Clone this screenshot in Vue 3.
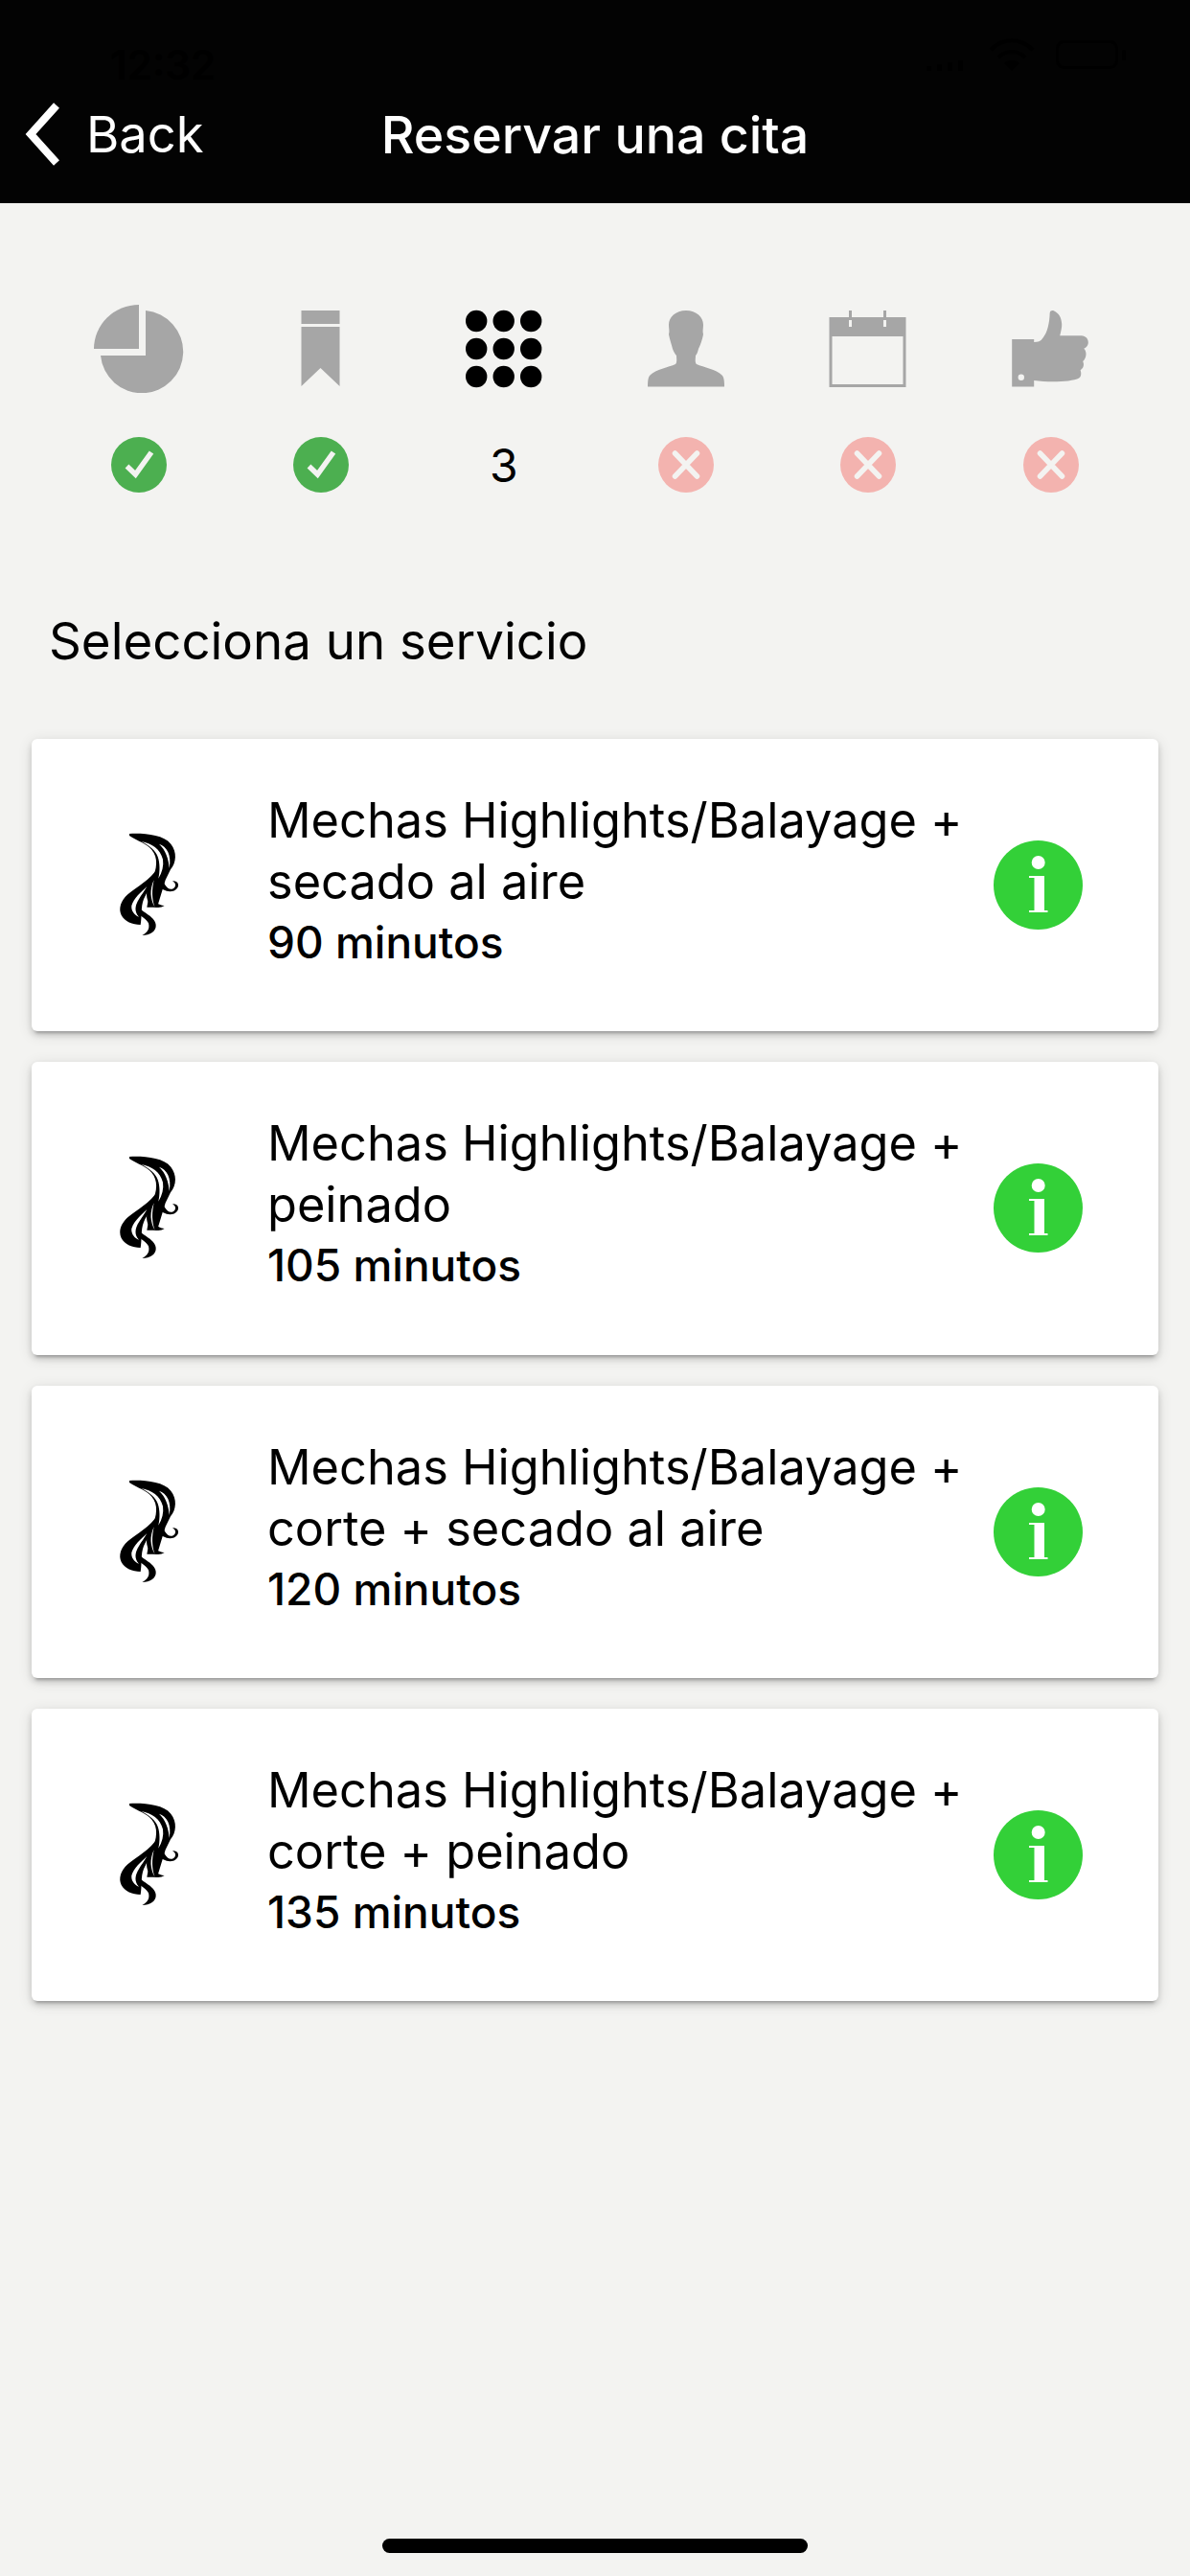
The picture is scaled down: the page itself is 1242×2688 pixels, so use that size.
<script setup>
const services = [
  { name: 'Mechas Highlights/Balayage + secado al aire', time: '90 minutos' },
  { name: 'Mechas Highlights/Balayage + peinado', time: '105 minutos' },
  { name: 'Mechas Highlights/Balayage + corte + secado al aire', time: '120 minutos' },
  { name: 'Mechas Highlights/Balayage + corte + peinado', time: '135 minutos' }
]
</script>

<template>
  <div class="page">
    <header class="header">
      <div class="status">
        <span class="clock">12:32</span>
        <svg class="status-icons" width="230" height="36" viewBox="960 50 230 36">
          <g fill="#000">
            <rect x="967" y="79" width="5" height="5" />
            <rect x="978" y="77" width="5" height="7" />
            <rect x="989" y="75" width="5" height="9" />
            <rect x="1000" y="73" width="5" height="11" />
          </g>
          <g fill="none" stroke="#000" stroke-width="4">
            <path d="M1034 62 C1047 49 1065 49 1078 62" />
            <path d="M1042 70 C1050 62 1062 62 1070 70" />
          </g>
          <path d="M1056 84 L1048 76 C1052 72 1060 72 1064 76 Z" fill="#000" />
          <rect x="1103.5" y="53.5" width="62" height="27" rx="7" fill="none" stroke="#000" stroke-width="3" />
          <rect x="1171" y="62" width="4" height="11" rx="2" fill="#000" />
        </svg>
      </div>
      <nav class="nav">
        <div class="back">
          <svg class="chevron" width="40" height="68" viewBox="0 0 40 68">
            <path d="M34 4 L7 34 L34 64" fill="none" stroke="#fff" stroke-width="8" />
          </svg>
          <span>Back</span>
        </div>
        <h1 class="title">Reservar una cita</h1>
        <div></div>
      </nav>
    </header>

    <main class="main">
      <section class="steps">
        <svg class="step-icon" viewBox="95 318 100 92">
          <path d="M145 318 V364 H98 A47 46 0 0 1 145 318Z" fill="#a6a6a6" />
          <path d="M152 324 A43.2 43.2 0 1 1 105 371 H152Z" fill="#a6a6a6" />
        </svg>
        <svg class="step-icon" viewBox="285.5 318 100 92">
          <rect x="315" y="324" width="40" height="14" fill="#a6a6a6" />
          <path d="M315 341 H355 V403 L335 384 L315 403Z" fill="#a6a6a6" />
        </svg>
        <svg class="step-icon" viewBox="475.8 318 100 92">
          <g fill="#000">
            <circle cx="497" cy="335" r="11.2" /><circle cx="525.5" cy="335" r="11.2" /><circle cx="554" cy="335" r="11.2" />
            <circle cx="497" cy="364" r="11.2" /><circle cx="525.5" cy="364" r="11.2" /><circle cx="554" cy="364" r="11.2" />
            <circle cx="497" cy="393" r="11.2" /><circle cx="525.5" cy="393" r="11.2" /><circle cx="554" cy="393" r="11.2" />
          </g>
        </svg>
        <svg class="step-icon" viewBox="-10 -6 100 92">
          <path d="M40 0 C51 0 58 7 58 15 C58 19 57 21 58 25 C57 30 55 36 53 40 C52 44 51 46 50 47 C50 50 49 54 51 56 C58 59 72 62 77 67 C79 69 80 71 80 79.5 L0 79.5 C0 71 1 69 3 67 C8 62 22 59 29 56 C31 54 30 50 30 47 C29 46 27 43 26 40 C25 36 23 30 22 25 C23 21 22 19 22 15 C22 7 29 0 40 0Z" fill="#a6a6a6" />
        </svg>
        <svg class="step-icon" viewBox="856.5 318 100 92">
          <path d="M866 331 H946 V404 H866Z M869 351 V401 H943 V351Z" fill="#a6a6a6" fill-rule="evenodd" />
          <rect x="886.5" y="324" width="3" height="7" fill="#a6a6a6" />
          <rect x="922.5" y="324" width="3" height="7" fill="#a6a6a6" />
          <rect x="886.5" y="334" width="3" height="7" fill="#f3f3f1" />
          <rect x="922.5" y="334" width="3" height="7" fill="#f3f3f1" />
        </svg>
        <svg class="step-icon" viewBox="-9.2 -6 100 92">
          <path d="M0 30 H23 V33 C27 33 30 32 32 29 C37 23 39 14 39.5 2.5 C40 0 42 -0.5 44 0.5 C49 3 51.5 7 52 14 C52.2 18 51 22 50 26.3 H72.5 C77 26.3 80 30 79.6 34 C79.3 37 77 39 75 39.7 C78 42 78.5 49 74 53 C75.5 56 75 60 71.4 62.3 C72.5 65 72.5 69 70 70.5 C62 74.5 40 75.5 23 73 V79.5 H0Z" fill="#a6a6a6" />
          <circle cx="9.6" cy="69.7" r="3.2" fill="#f3f3f1" />
        </svg>

        <svg class="step-state" viewBox="-29 -29 58 58">
          <circle r="29" fill="#4caf50" />
          <path d="M-12.5 1.5 L-3.6 10 L13 -13" fill="none" stroke="#f3f3f1" stroke-width="5.5" />
        </svg>
        <svg class="step-state" viewBox="-29 -29 58 58">
          <circle r="29" fill="#4caf50" />
          <path d="M-12.5 1.5 L-3.6 10 L13 -13" fill="none" stroke="#f3f3f1" stroke-width="5.5" />
        </svg>
        <div class="step-number">3</div>
        <svg class="step-state" viewBox="-29 -29 58 58">
          <circle r="29" fill="#f3b3af" />
          <path d="M-11.5 -12 L11.5 12 M11.5 -12 L-11.5 12" fill="none" stroke="#f3f3f1" stroke-width="5.5" stroke-linecap="round" />
        </svg>
        <svg class="step-state" viewBox="-29 -29 58 58">
          <circle r="29" fill="#f3b3af" />
          <path d="M-11.5 -12 L11.5 12 M11.5 -12 L-11.5 12" fill="none" stroke="#f3f3f1" stroke-width="5.5" stroke-linecap="round" />
        </svg>
        <svg class="step-state" viewBox="-29 -29 58 58">
          <circle r="29" fill="#f3b3af" />
          <path d="M-11.5 -12 L11.5 12 M11.5 -12 L-11.5 12" fill="none" stroke="#f3f3f1" stroke-width="5.5" stroke-linecap="round" />
        </svg>
      </section>

      <h2 class="heading">Selecciona un servicio</h2>

      <ul class="cards">
        <li v-for="service in services" :key="service.time" class="card">
          <svg class="hair" width="120" height="130" viewBox="0 0 360 390">
            <g fill="#000">
              <path d="M135 60 C180 58 240 62 265 92 C285 118 282 150 264 172 L248 205 L222 290 L190 290 L205 205 C222 170 226 135 205 110 C190 92 160 82 135 66Z" />
              <path d="M225 165 C200 205 160 225 130 250 C108 270 100 295 110 315 C120 335 145 345 170 345 C175 320 170 290 180 265 C190 240 205 220 225 200Z" />
              <path d="M235 180 C238 215 255 240 272 232 C282 226 282 215 270 208 C286 206 293 220 285 230 C272 248 240 242 222 220Z" />
              <path d="M205 215 C200 245 205 280 245 285 C230 295 205 292 195 275 C185 255 190 235 195 220Z" />
              <path d="M160 280 C165 305 215 315 218 345 C220 365 200 378 175 378 C190 370 200 360 195 340 C185 320 155 315 150 285Z" />
            </g>
            <g fill="#fff">
              <path d="M172 84 C205 90 232 108 240 140 C243 160 238 180 226 200 C231 178 231 152 224 132 C217 112 196 96 172 84Z" />
              <path d="M228 92 C252 100 268 125 260 168 C258 138 248 110 228 92Z" />
              <path d="M190 225 C170 245 150 260 142 285 C140 300 150 315 165 320 C150 305 152 285 165 265 C172 252 182 240 190 225Z" />
              <path d="M212 205 C205 235 205 265 215 290 C200 265 198 235 212 205Z" />
            </g>
          </svg>
          <div class="card-text">
            <p class="card-name">{{ service.name }}</p>
            <p class="card-time">{{ service.time }}</p>
          </div>
          <svg class="info" width="93" height="93" viewBox="1036 877 93 93">
            <circle cx="1082.5" cy="923.5" r="46.5" fill="#33d038" />
            <circle cx="1082.7" cy="900" r="7" fill="#fff" />
            <path d="M1073 914 H1089 V950 H1092.5 V952 H1073 V950 H1078.5 V916 H1073Z" fill="#fff" />
          </svg>
        </li>
      </ul>
    </main>

    <div class="home-bar"></div>
  </div>
</template>

<style scoped>
.page {
  width: 1242px;
  height: 2688px;
  display: flex;
  flex-direction: column;
  background: #f3f3f1;
  color: #000;
  font-family: Inter, "Liberation Sans", sans-serif;
  overflow: hidden;
}
.header {
  height: 212px;
  background: #030303;
  color: #fff;
  display: flex;
  flex-direction: column;
}
.status {
  height: 100px;
  display: flex;
  justify-content: space-between;
  padding: 40px 52px 0 115px;
  box-sizing: border-box;
}
.clock {
  color: #000;
  font-size: 42px;
  line-height: 56px;
  font-weight: 600;
}
.nav {
  display: grid;
  grid-template-columns: 1fr auto 1fr;
  align-items: center;
  height: 80px;
}
.back {
  display: flex;
  align-items: center;
  gap: 25px;
  padding-left: 25px;
  font-size: 52.5px;
}
.title {
  margin: 0;
  font-size: 53.7px;
  font-weight: 500;
}
.main {
  flex: 1;
  padding: 106px 33px 0;
}
.steps {
  display: grid;
  grid-template-columns: repeat(6, 1fr);
  grid-template-rows: 92px 58px;
  row-gap: 46px;
  justify-items: center;
  padding: 0 17px;
}
.step-icon {
  width: 100px;
  height: 92px;
}
.step-state {
  width: 58px;
  height: 58px;
}
.step-number {
  font-size: 48px;
  line-height: 60px;
}
.heading {
  margin: 124px 18px 71px;
  font-size: 52.8px;
  line-height: 62px;
  font-weight: 400;
}
.cards {
  list-style: none;
  margin: 0;
  padding: 0;
  display: flex;
  flex-direction: column;
  gap: 32px;
}
.card {
  height: 305.33px;
  display: flex;
  align-items: center;
  padding: 0 79px 0 57px;
  box-sizing: border-box;
  background: #fff;
  border-radius: 6px;
  box-shadow: 0 6px 3px -4px rgba(0, 0, 0, .2), 0 4px 6px rgba(0, 0, 0, .14), 0 3px 15px rgba(0, 0, 0, .12);
}
.hair {
  flex: none;
  margin: 0 69px 17px 0;
}
.card-text {
  flex: 1;
  padding-bottom: 9px;
}
.card-name {
  margin: 0;
  font-size: 50.5px;
  line-height: 64px;
}
.card-time {
  margin: 0;
  font-size: 46px;
  line-height: 62px;
  font-weight: 500;
}
.info {
  flex: none;
}
.home-bar {
  position: absolute;
  left: 399px;
  top: 2649px;
  width: 444px;
  height: 15px;
  border-radius: 8px;
  background: #000;
}
</style>
